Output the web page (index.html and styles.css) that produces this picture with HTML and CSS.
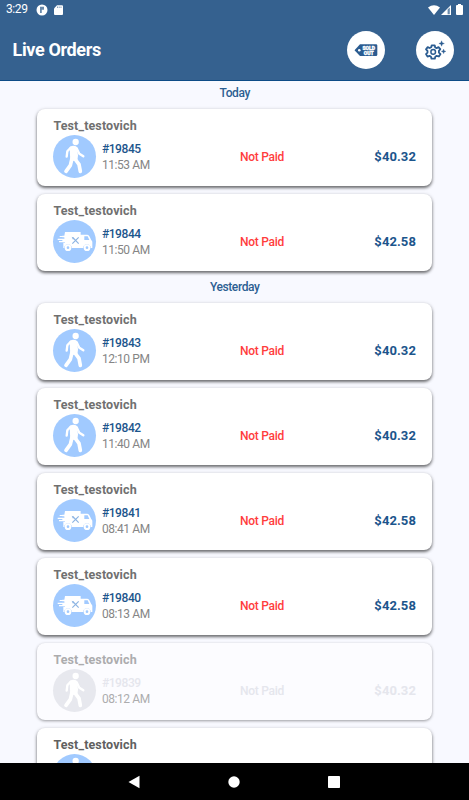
FILE: index.html
```html
<!DOCTYPE html>
<html lang="en">
<head>
<meta charset="utf-8">
<title>Live Orders</title>
<link rel="stylesheet" href="styles.css">
</head>
<body>
<svg class="defs" aria-hidden="true">
  <symbol id="walk" viewBox="0 0 129 129">
    <circle cx="68" cy="21" r="9.5" fill="#fff"/>
    <path d="M50 36Q62 28 72 36L75 62 73 78 52 77 51 60Z" fill="#fff"/>
    <g fill="none" stroke="#fff" stroke-linecap="round" stroke-linejoin="round">
      <path d="M53 38L43 49 41 65" stroke-width="7"/>
      <path d="M71 40L79 56 91 64" stroke-width="7"/>
      <path d="M57 70L52 91 39 109" stroke-width="11"/>
      <path d="M66 72L78 88 82 109" stroke-width="11"/>
    </g>
  </symbol>
  <symbol id="truck" viewBox="0 0 129 129">
    <path d="M36 36H83V44H103Q107 44 110 50L115 61Q118 63 118 67V84H113A11 11 0 0 0 91 84H56A11 11 0 0 0 34 84H31V68H36V63H28V57H34V52H28V47H34Z" fill="#fff"/>
    <path d="M94 49H104L109 60H94Z" fill="#a1caff"/>
    <g fill="none" stroke="#fff" stroke-width="3.5"><path d="M20 49.500H34M14 58H34M18 65H36"/></g>
    <circle cx="45" cy="83" r="7" fill="none" stroke="#fff" stroke-width="6"/>
    <circle cx="102" cy="83" r="7" fill="none" stroke="#fff" stroke-width="6"/>
    <path d="M59 52L77 71M77 52L58 71" stroke="#8bb3e2" stroke-width="3.5" fill="none"/>
    <path d="M56 50L64 55 60 59Z" fill="#8bb3e2"/>
  </symbol>
</svg>

<header class="top">
  <div class="status">
    <span class="clock">3:29</span>
    <svg class="st-app" viewBox="0 0 12 12"><circle cx="6" cy="6" r="5.500" fill="#fff"/><path d="M4 2.800H8V5.800H5.800V9H4Z" fill="#35618f" opacity=".75"/></svg>
    <svg class="st-card" viewBox="0 0 9 10"><path d="M3 .2H8Q9 .2 9 1.200V9Q9 10 8 10H1Q0 10 0 9V3.400Z" fill="#fff"/><path d="M3.500 1.500V3M5.200 1.500V3M7 1.500V3" stroke="#35618f" stroke-width=".6"/></svg>
    <span class="grow"></span>
    <svg class="st-wifi" viewBox="0 0 12 10"><path d="M0 2.400Q6-2.100 12 2.400L6 10Z" fill="#fff"/></svg>
    <svg class="st-cell" viewBox="0 0 10 10"><path d="M0 10L10 0V10Z" fill="#fff"/><path d="M6.600 4.500L8.800 2.500V9.200H6.600Z" fill="#35618f" opacity=".75"/></svg>
    <svg class="st-batt" viewBox="0 0 7 11"><path d="M2 0H5V1H6Q7 1 7 2V10Q7 11 6 11H1Q0 11 0 10V2Q0 1 1 1H2Z" fill="#fff"/></svg>
  </div>
  <div class="bar">
    <h1>Live Orders</h1>
    <span class="round">
      <svg viewBox="0 0 38 38">
        <path d="M7.500 19.200L13 13.300H29Q30.300 13.300 30.300 14.600V23.800Q30.300 25.100 29 25.100H13Z" fill="#2b5c91"/>
        <circle cx="12.300" cy="19.200" r="1.300" fill="#fff"/>
        <g class="sold"><text x="21.700" y="18.700">SOLD</text><text x="21.700" y="23.500">OUT</text></g>
      </svg>
    </span>
    <span class="round">
      <svg viewBox="0 0 38 38" fill="none" stroke="#2b5c91" stroke-linejoin="round">
        <path stroke-width="1.800" d="M15.700 14.300H18.700L19.200 16.500 20.600 17.100 22.500 16.100 24.300 18.200 22.900 19.900V21.600L24.500 23.100 22.900 25.500 20.700 24.800 19.300 25.700 18.800 27.700H15.500L15 25.700 13.500 24.900 11.500 25.600 10 23.100 11.500 21.600V19.900L10 18.400 11.700 16.100 13.700 17 15.200 16.300Z"/>
        <circle cx="17.200" cy="20.900" r="2.300" stroke-width="1.500"/>
        <path fill="#2b5c91" stroke="#2b5c91" stroke-width=".4" d="M25.600 9.800L26.300 11.800 28.300 12.500 26.300 13.200 25.600 15.200 24.900 13.200 22.900 12.500 24.900 11.800ZM27.600 18.200L28.200 19.800 29.800 20.400 28.200 21 27.600 22.600 27 21 25.400 20.400 27 19.800Z"/>
      </svg>
    </span>
  </div>
</header>

<main class="list">
  <h2>Today</h2>
  <article class="card"><h3>Test_testovich</h3><div class="row"><svg class="kind"><use href="#walk"/></svg><div class="info"><b>#19845</b><span>11:53 AM</span></div><span class="paid">Not Paid</span><strong>$40.32</strong></div></article>
  <article class="card"><h3>Test_testovich</h3><div class="row"><svg class="kind"><use href="#truck"/></svg><div class="info"><b>#19844</b><span>11:50 AM</span></div><span class="paid">Not Paid</span><strong>$42.58</strong></div></article>
  <h2>Yesterday</h2>
  <article class="card"><h3>Test_testovich</h3><div class="row"><svg class="kind"><use href="#walk"/></svg><div class="info"><b>#19843</b><span>12:10 PM</span></div><span class="paid">Not Paid</span><strong>$40.32</strong></div></article>
  <article class="card"><h3>Test_testovich</h3><div class="row"><svg class="kind"><use href="#walk"/></svg><div class="info"><b>#19842</b><span>11:40 AM</span></div><span class="paid">Not Paid</span><strong>$40.32</strong></div></article>
  <article class="card"><h3>Test_testovich</h3><div class="row"><svg class="kind"><use href="#truck"/></svg><div class="info"><b>#19841</b><span>08:41 AM</span></div><span class="paid">Not Paid</span><strong>$42.58</strong></div></article>
  <article class="card"><h3>Test_testovich</h3><div class="row"><svg class="kind"><use href="#truck"/></svg><div class="info"><b>#19840</b><span>08:13 AM</span></div><span class="paid">Not Paid</span><strong>$42.58</strong></div></article>
  <article class="card off"><h3>Test_testovich</h3><div class="row"><svg class="kind"><use href="#walk"/></svg><div class="info"><b>#19839</b><span>08:12 AM</span></div><span class="paid">Not Paid</span><strong>$40.32</strong></div></article>
  <article class="card last"><h3>Test_testovich</h3><div class="row"><svg class="kind"><use href="#walk"/></svg></div></article>
</main>

<nav class="nav">
  <svg viewBox="0 0 12 14"><path d="M11.500 .8V13.200L.5 7Z" fill="#fff"/></svg>
  <svg viewBox="0 0 12 14"><circle cx="6" cy="7" r="5.700" fill="#fff"/></svg>
  <svg viewBox="0 0 12 14"><rect y="1" width="12" height="12" rx=".8" fill="#fff"/></svg>
</nav>
</body>
</html>
```
FILE: styles.css
```css
* { box-sizing: border-box; }
html, body { height: 100%; }
body {
  margin: 0;
  display: flex;
  flex-direction: column;
  overflow: hidden;
  background: #f8f9ff;
  font-family: Roboto, "Liberation Sans", sans-serif;
}
h1, h2, h3 { margin: 0; }
svg { display: block; flex: none; }
.defs { position: absolute; width: 0; height: 0; }

.top {
  flex: none;
  height: 81px;
  background: #35618f;
  border-bottom: 1px solid #0d4c87;
  color: #fff;
}
.status { display: flex; align-items: center; height: 19px; padding: 0 6px; }
.clock { width: 30px; font-size: 12px; line-height: 19px; letter-spacing: -.4px; }
.st-app { width: 12px; height: 12px; }
.st-card { width: 9px; height: 10px; margin-left: 6px; }
.grow { flex: 1; }
.st-wifi { width: 12px; height: 10px; margin-right: 1px; }
.st-cell { width: 10px; height: 10px; margin-right: 5px; }
.st-batt { width: 7px; height: 11px; }
.bar { display: flex; align-items: center; height: 62px; padding: 0 15px 0 12.500px; }
.bar h1 { flex: 1; font-size: 18px; font-weight: 700; line-height: 22px; letter-spacing: -.35px; }
.round { width: 38px; height: 38px; border-radius: 50%; background: #fff; }
.round + .round { margin-left: 31px; }
.sold {
  fill: #fff;
  stroke: #fff;
  stroke-width: .35px;
  font-size: 5px;
  font-weight: 900;
  text-anchor: middle;
}

.list { flex: 1; min-height: 0; overflow: hidden; padding: 0 37px 0 37.400px; }
h2 {
  height: 24px;
  margin-bottom: 3.700px;
  color: #2c5f92;
  font-size: 12px;
  font-weight: 500;
  line-height: 24px;
  text-align: center;
  letter-spacing: -.4px;
}
.card + h2 { margin-top: -3.800px; }
.card {
  height: 77.300px;
  margin-bottom: 7.800px;
  padding: 8px 16px 0;
  border-radius: 8px;
  background: #fff;
  box-shadow: 0 2px 3px rgba(0, 0, 0, .48), 0 1px 4px rgba(0, 0, 0, .2);
}
h3 { color: #707070; font-size: 12.500px; font-weight: 700; line-height: 18px; letter-spacing: .12px; }
.row { display: flex; align-items: center; height: 43px; }
.kind { width: 43px; height: 43px; border-radius: 50%; background: #a1caff; }
.info {
  display: flex;
  flex-direction: column;
  width: 138px;
  margin-left: 5.500px;
  padding-top: 1.500px;
  font-size: 12px;
  line-height: 16px;
  letter-spacing: -.42px;
}
.info b { color: #1c558c; font-weight: 500; }
.info span { color: #858585; }
.paid { flex: 1; padding-top: 1px; color: #ff3d3d; font-size: 12px; font-weight: 500; letter-spacing: -.25px; }
.row strong { color: #1c558c; font-size: 13px; font-weight: 700; letter-spacing: .1px; }

.off { background: #fcfcff; box-shadow: 0 1px 3px rgba(0, 0, 0, .38); }
.off h3, .off .info span { color: #acacae; }
.off .kind { background: #e7e8ee; }
.off .info b, .off .paid, .off strong { color: #e5e6ed; }
.last h3 { color: #606060; }

.nav {
  flex: none;
  display: flex;
  justify-content: center;
  align-items: center;
  gap: 88px;
  height: 37px;
  padding-right: 1px;
  background: #000;
}
.nav svg { width: 12px; height: 14px; }
```
